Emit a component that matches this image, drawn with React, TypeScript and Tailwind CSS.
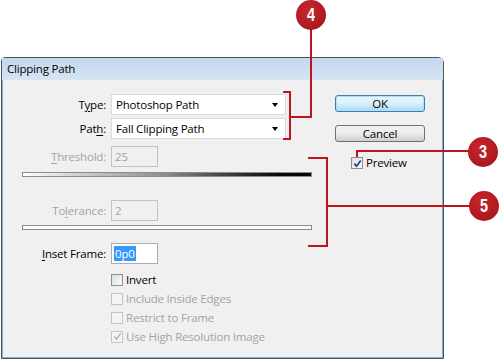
import React from "react";

const font = { fontFamily: '"Open Sans", "Noto Sans", sans-serif' };

function Check({ checked, disabled, blue }: { checked?: boolean; disabled?: boolean; blue?: boolean }) {
  return (
    <span
      className={`relative grid h-[12px] w-[12px] shrink-0 place-items-center border ${
        disabled ? "border-[#c4c4c4] bg-[#f4f4f4]" : "border-[#8e8f8f] bg-gradient-to-br from-[#dcdcdc] to-[#fbfbfb]"
      }`}
    >
      {checked && (
        <svg viewBox="0 0 10 10" className="h-[9px] w-[9px]">
          <path
            d="M1.5 5.2 L4 8 L8.6 1.6"
            fill="none"
            stroke={blue ? "#1f3f8c" : "#a8a8a8"}
            strokeWidth={blue ? 1.9 : 1.3}
          />
        </svg>
      )}
    </span>
  );
}

function Select({ value }: { value: string }) {
  return (
    <div className="flex h-[21px] w-[175px] items-center justify-between border border-[#dadada] bg-white pl-[4px] pr-[7px] text-black">
      <span>{value}</span>
      <span className="h-0 w-0 border-x-[3.5px] border-t-[4px] border-x-transparent border-t-black" />
    </div>
  );
}

function Bubble({ n, className }: { n: string; className: string }) {
  return (
    <div
      className={`absolute grid h-[30px] w-[30px] place-items-center rounded-full bg-[radial-gradient(circle_at_40%_35%,#c8262c,#9e1419)] text-[18px] font-bold text-white ${className}`}
      style={{ fontFamily: '"Liberation Sans", Arial, sans-serif' }}
    >
      <span className="scale-x-[0.8] leading-none">{n}</span>
    </div>
  );
}

export default function App() {
  const rows = [
    { label: "Invert", checked: false, disabled: false },
    { label: "Include Inside Edges", checked: false, disabled: true },
    { label: "Restrict to Frame", checked: false, disabled: true },
    { label: "Use High Resolution Image", checked: true, disabled: true },
  ];

  return (
    <div
      className="relative h-[359px] w-[500px] overflow-hidden bg-white text-[11.5px] leading-none tracking-[-0.2px]"
      style={font}
    >
      <div className="ml-[1px] mt-[57px] flex h-[302px] w-[443px] flex-col rounded-tl-[4px] rounded-tr-[6px] border border-[#4e5258]">
        <div className="flex h-[22px] shrink-0 items-center bg-gradient-to-b from-[#c3d7ee] to-[#d7e4f2] pl-[5px] text-black">
          Clipping Path
        </div>
        <div className="flex flex-1 border-x border-b border-[#79b3dd] bg-[#f0f0f0]">
          <div className="w-[320px] pt-[14px]">
            <div className="flex h-[21px] items-center">
              <span className="w-[103px] text-right">
                T<u className="underline-offset-2">y</u>pe:
              </span>
              <div className="ml-[5px]">
                <Select value="Photoshop Path" />
              </div>
            </div>
            <div className="mt-[3px] flex h-[21px] items-center">
              <span className="w-[103px] text-right">
                Pat<u className="underline-offset-2">h</u>:
              </span>
              <div className="ml-[5px]">
                <Select value="Fall Clipping Path" />
              </div>
            </div>

            <div className="mt-[7px] flex h-[21px] items-center text-[#a3a3a3]">
              <span className="w-[103px] text-right">
                <u className="underline-offset-2">T</u>hreshold:
              </span>
              <div className="ml-[5px] flex h-[21px] w-[47px] items-center border border-[#c2c2c2] pl-[3px]">25</div>
            </div>
            <div className="ml-[19px] mt-[5px] h-[5px] w-[290px] border border-[#8c8c8c] bg-gradient-to-r from-white via-[#8a8a8a] to-black" />

            <div className="mt-[23px] flex h-[21px] items-center text-[#a3a3a3]">
              <span className="w-[103px] text-right">
                To<u className="underline-offset-2">l</u>erance:
              </span>
              <div className="ml-[5px] flex h-[21px] w-[47px] items-center border border-[#c2c2c2] pl-[3px]">2</div>
            </div>
            <div className="ml-[19px] mt-[4px] h-[5px] w-[290px] border border-[#8c8c8c] bg-[#fbfbfb]" />

            <div className="mt-[13px] flex h-[21px] items-center">
              <span className="w-[103px] text-right">
                <u className="underline-offset-2">I</u>nset Frame:
              </span>
              <div className="ml-[5px] flex h-[21px] w-[47px] items-center border border-[#abadb3] bg-white pl-[2px]">
                <span className="bg-[#3399ff] px-[1px] py-[2px] text-white">0p0</span>
              </div>
            </div>

            <div className="mt-[6px] flex flex-col">
              {rows.map((r) => (
                <div key={r.label} className="ml-[108px] flex h-[19px] items-center gap-[3px]">
                  <Check checked={r.checked} disabled={r.disabled} />
                  <span className={r.disabled ? "text-[#a3a3a3]" : "text-black"}>{r.label}</span>
                </div>
              ))}
            </div>
          </div>

          <div className="ml-[12px] flex flex-col pt-[15px]">
            <div className="flex h-[17px] w-[90px] items-center justify-center rounded-[3px] border border-[#3c7fb1] bg-gradient-to-b from-[#eaf6fd] via-[#d9f0fc] to-[#a7d9f5] text-black shadow-[inset_0_0_0_1px_#aee0fa]">
              OK
            </div>
            <div className="mt-[13px] flex h-[17px] w-[90px] items-center justify-center rounded-[3px] border border-[#707070] bg-gradient-to-b from-[#f2f2f2] via-[#ebebeb] to-[#cfcfcf] text-black">
              Cancel
            </div>
            <div className="ml-[16px] mt-[15px] flex items-center gap-[3px]">
              <Check checked blue />
              <span className="text-black">Preview</span>
            </div>
          </div>
        </div>
      </div>

      <svg className="absolute left-0 top-0" width="500" height="359" viewBox="0 0 500 359">
        <g fill="none" stroke="#c0141d" strokeWidth="2">
          <path d="M283 92 H290 V139 H283" />
          <path d="M290 117 H311 V28" />
          <path d="M308 158 H327 V246 H308" />
          <path d="M327 206 H470" />
          <path d="M357 157 V151 H470" />
        </g>
      </svg>
      <Bubble n="4" className="left-[296px] top-[0px]" />
      <Bubble n="3" className="left-[468px] top-[137px]" />
      <Bubble n="5" className="left-[469px] top-[191px]" />
    </div>
  );
}
